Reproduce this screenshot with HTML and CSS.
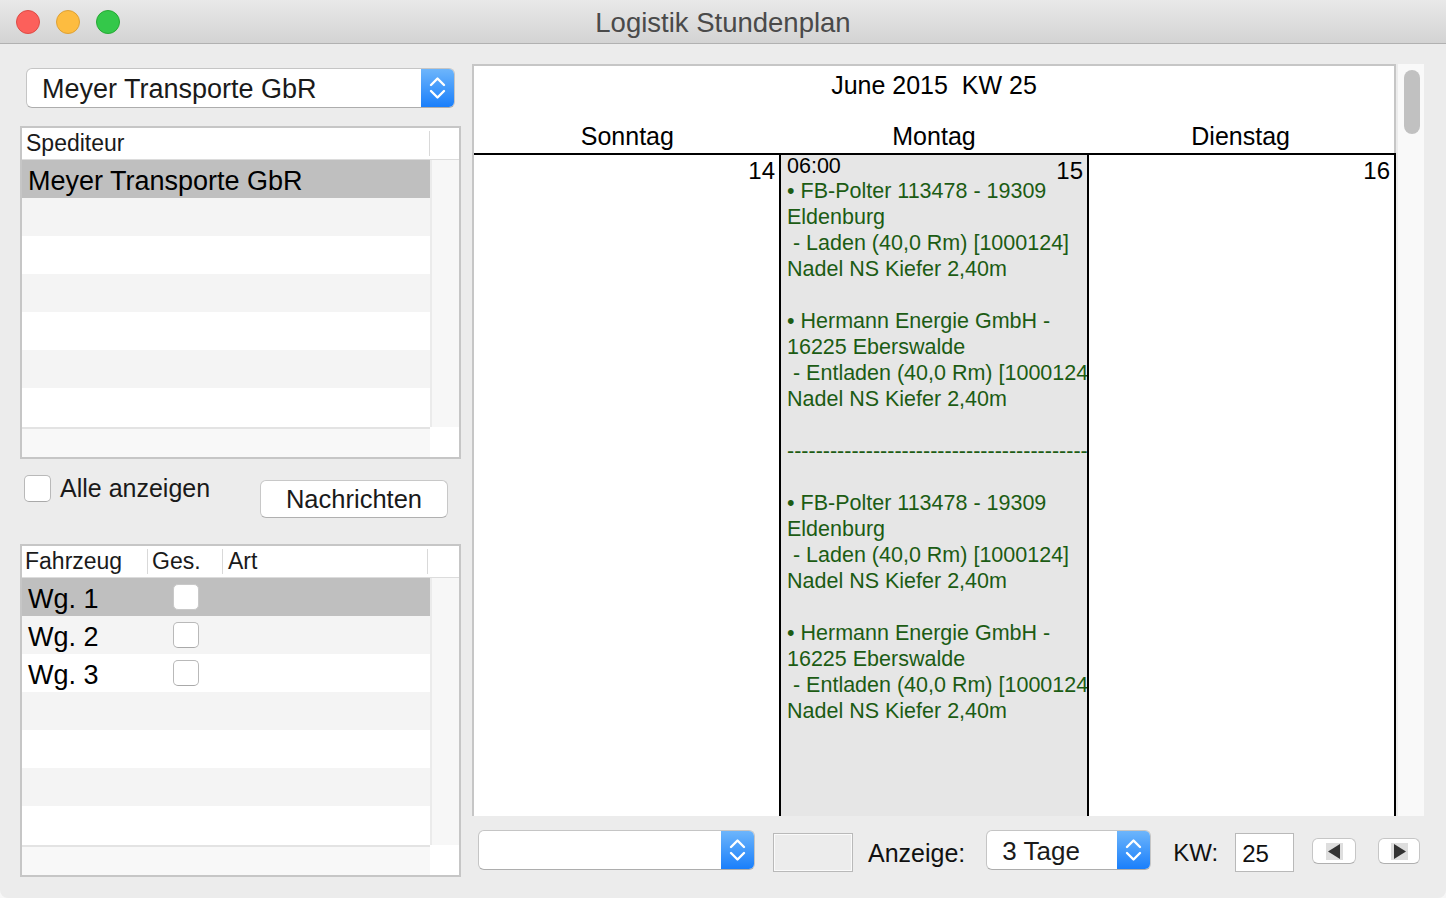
FILE: index.html
```html
<!DOCTYPE html>
<html>
<head>
    <meta charset='utf-8'>
    <title>Logistik Stundenplan</title>
    <meta name='viewport' content='width=device-width, initial-scale=1'>
    <link rel="stylesheet" href="styles.css">
</head>
<body>
<div class="window">
    <header class="titlebar">
        <div class="lights">
            <span class="light red"></span>
            <span class="light yellow"></span>
            <span class="light green"></span>
        </div>
        <div class="title">Logistik Stundenplan</div>
        <div class="lights-spacer"></div>
    </header>

    <div class="content">
        <section class="sidebar">
            <div class="popup popup-spediteur">
                <span class="popup-text">Meyer Transporte GbR</span>
                <span class="popup-arrows">
                    <svg width="33" height="38" viewBox="0 0 33 38"><polyline points="10,16 16.5,9.5 23,16" fill="none" stroke="#fff" stroke-width="2.4" stroke-linecap="round" stroke-linejoin="round"/><polyline points="10,22 16.5,28.5 23,22" fill="none" stroke="#fff" stroke-width="2.4" stroke-linecap="round" stroke-linejoin="round"/></svg>
                </span>
            </div>

            <div class="table table-spediteur">
                <div class="thead">
                    <div class="th th-spediteur">Spediteur</div>
                </div>
                <div class="tbody">
                    <div class="rows">
                        <div class="row selected"><span class="cell">Meyer Transporte GbR</span></div>
                        <div class="row"></div>
                        <div class="row"></div>
                        <div class="row"></div>
                        <div class="row"></div>
                        <div class="row"></div>
                        <div class="row"></div>
                    </div>
                    <div class="vscroll"></div>
                </div>
                <div class="tfoot"><div class="hscroll"></div><div class="corner"></div></div>
            </div>

            <div class="options">
                <label class="check-label"><span class="checkbox"></span>Alle anzeigen</label>
                <button class="button">Nachrichten</button>
            </div>

            <div class="table table-fahrzeug">
                <div class="thead">
                    <div class="th col-fahrzeug">Fahrzeug</div>
                    <div class="th col-ges">Ges.</div>
                    <div class="th col-art">Art</div>
                </div>
                <div class="tbody">
                    <div class="rows">
                        <div class="row selected"><span class="cell col-fahrzeug">Wg. 1</span><span class="cell col-ges"><span class="checkbox small"></span></span></div>
                        <div class="row"><span class="cell col-fahrzeug">Wg. 2</span><span class="cell col-ges"><span class="checkbox small"></span></span></div>
                        <div class="row"><span class="cell col-fahrzeug">Wg. 3</span><span class="cell col-ges"><span class="checkbox small"></span></span></div>
                        <div class="row"></div>
                        <div class="row"></div>
                        <div class="row"></div>
                        <div class="row"></div>
                    </div>
                    <div class="vscroll"></div>
                </div>
                <div class="tfoot"><div class="hscroll"></div><div class="corner"></div></div>
            </div>
        </section>

        <section class="main">
            <div class="calendar">
                <div class="calendar-doc">
                    <div class="cal-head">
                        <div class="cal-title">June 2015  KW 25</div>
                        <div class="cal-days">
                            <div>Sonntag</div>
                            <div>Montag</div>
                            <div>Dienstag</div>
                        </div>
                    </div>
                    <div class="cal-grid">
                        <div class="day">
                            <div class="day-num">14</div>
                        </div>
                        <div class="day today">
                            <div class="day-num">15</div>
                            <div class="time">06:00</div>
                            <div class="entries">
                                <div class="line">• FB-Polter 113478 - 19309</div>
                                <div class="line">Eldenburg</div>
                                <div class="line"> - Laden (40,0 Rm) [1000124]</div>
                                <div class="line">Nadel NS Kiefer 2,40m</div>
                                <div class="line"></div>
                                <div class="line">• Hermann Energie GmbH -</div>
                                <div class="line">16225 Eberswalde</div>
                                <div class="line"> - Entladen (40,0 Rm) [1000124]</div>
                                <div class="line">Nadel NS Kiefer 2,40m</div>
                                <div class="line"></div>
                                <div class="line">--------------------------------------------------------</div>
                                <div class="line"></div>
                                <div class="line">• FB-Polter 113478 - 19309</div>
                                <div class="line">Eldenburg</div>
                                <div class="line"> - Laden (40,0 Rm) [1000124]</div>
                                <div class="line">Nadel NS Kiefer 2,40m</div>
                                <div class="line"></div>
                                <div class="line">• Hermann Energie GmbH -</div>
                                <div class="line">16225 Eberswalde</div>
                                <div class="line"> - Entladen (40,0 Rm) [1000124]</div>
                                <div class="line">Nadel NS Kiefer 2,40m</div>
                            </div>
                        </div>
                        <div class="day">
                            <div class="day-num">16</div>
                        </div>
                    </div>
                </div>
                <div class="cal-scroll"><div class="thumb"></div></div>
            </div>

            <div class="toolbar">
                <div class="popup popup-empty">
                    <span class="popup-text"></span>
                    <span class="popup-arrows">
                        <svg width="33" height="38" viewBox="0 0 33 38"><polyline points="10,16 16.5,9.5 23,16" fill="none" stroke="#fff" stroke-width="2.4" stroke-linecap="round" stroke-linejoin="round"/><polyline points="10,22 16.5,28.5 23,22" fill="none" stroke="#fff" stroke-width="2.4" stroke-linecap="round" stroke-linejoin="round"/></svg>
                    </span>
                </div>
                <div class="swatch"></div>
                <span class="tb-label label-anzeige">Anzeige:</span>
                <div class="popup popup-tage">
                    <span class="popup-text">3 Tage</span>
                    <span class="popup-arrows">
                        <svg width="33" height="38" viewBox="0 0 33 38"><polyline points="10,16 16.5,9.5 23,16" fill="none" stroke="#fff" stroke-width="2.4" stroke-linecap="round" stroke-linejoin="round"/><polyline points="10,22 16.5,28.5 23,22" fill="none" stroke="#fff" stroke-width="2.4" stroke-linecap="round" stroke-linejoin="round"/></svg>
                    </span>
                </div>
                <span class="tb-label label-kw">KW:</span>
                <div class="field">25</div>
                <button class="nav nav-prev">
                    <svg width="17" height="17" viewBox="0 0 17 17"><rect width="17" height="17" fill="#dedede"/><polygon points="2,8.5 14,1 14,16" fill="#333"/></svg>
                </button>
                <button class="nav nav-next">
                    <svg width="17" height="17" viewBox="0 0 17 17"><rect width="17" height="17" fill="#dedede"/><polygon points="3,1 3,16 15,8.5" fill="#333"/></svg>
                </button>
            </div>
        </section>
    </div>
</div>
</body>
</html>
```

FILE: styles.css
```css
* {
    font-family: "Liberation Sans", Arial, Helvetica, sans-serif;
    box-sizing: border-box;
}

html, body {
    margin: 0;
    padding: 0;
    background: #f7f7f7;
}

.window {
    width: 1446px;
    height: 898px;
    background: #ececec;
    border-radius: 0 0 8px 8px;
    overflow: hidden;
    display: flex;
    flex-direction: column;
    color: #111;
}

/* title bar */

.titlebar {
    height: 44px;
    flex: none;
    display: flex;
    align-items: center;
    background: linear-gradient(#e9e9e9, #d3d3d3);
    border-bottom: 1px solid #b1b1b1;
}

.lights {
    width: 140px;
    display: flex;
    gap: 16px;
    padding-left: 16px;
}

.light {
    width: 24px;
    height: 24px;
    border-radius: 50%;
    border: 1px solid;
}

.red { background: #fc605b; border-color: #de4b45; }
.yellow { background: #fdbc40; border-color: #dea135; }
.green { background: #34c84a; border-color: #26a934; }

.title {
    flex: 1;
    padding-top: 3px;
    text-align: center;
    font-size: 27.5px;
    color: #4a4a4a;
}

.lights-spacer {
    width: 140px;
}

/* layout */

.content {
    flex: 1;
    display: flex;
    gap: 11px;
    padding: 20px 22px 0 20px;
}

.sidebar {
    width: 441px;
    flex: none;
    display: flex;
    flex-direction: column;
}

.main {
    width: 952px;
    flex: none;
    display: flex;
    flex-direction: column;
}

/* popup buttons */

.popup {
    display: flex;
    align-items: center;
    height: 40px;
    flex: none;
    background: #fff;
    border: 1px solid #c5c5c5;
    border-bottom-color: #adadad;
    border-radius: 6px;
    overflow: hidden;
}

.popup-text {
    flex: 1;
    padding-left: 15px;
    padding-top: 2px;
    white-space: nowrap;
    color: #1a1a1a;
}

.popup-arrows {
    width: 33px;
    height: 100%;
    display: flex;
    align-items: center;
    justify-content: center;
    background: linear-gradient(#6db5fb, #1a7ffb);
}

.popup-spediteur {
    margin: 4px 6px 0;
}

.popup-spediteur .popup-text {
    font-size: 27px;
}

/* tables */

.table {
    height: 333px;
    flex: none;
    border: 2px solid #c6c6c6;
    background: #fff;
    display: flex;
    flex-direction: column;
}

.table-spediteur {
    margin-top: 18px;
}

.table-fahrzeug {
    margin-top: 26px;
}

.thead {
    height: 32px;
    flex: none;
    display: flex;
    align-items: center;
    border-bottom: 1px solid #dcdcdc;
}

.th {
    height: 25px;
    line-height: 25px;
    font-size: 23px;
    padding-left: 3px;
    border-right: 1px solid #d9d9d9;
    color: #1a1a1a;
    white-space: nowrap;
}

.th-spediteur {
    width: 408px;
    padding-left: 4px;
}

.col-fahrzeug {
    width: 126px;
    flex: none;
}

.col-ges {
    width: 75px;
    flex: none;
}

.th.col-ges {
    padding-left: 4px;
}

.col-art {
    width: 205px;
    flex: none;
}

.th.col-art {
    padding-left: 5px;
}

.tbody {
    flex: 1;
    display: flex;
}

.rows {
    flex: 1;
}

.vscroll {
    width: 29px;
    background: #f7f7f7;
    border-left: 2px solid #ebebeb;
}

.row {
    height: 38px;
    display: flex;
    align-items: center;
    font-size: 27px;
    color: #000;
}

.row:nth-child(even) {
    background: #f4f4f4;
}

.row.selected {
    background: #bfbfbf;
}

.cell {
    padding-left: 6px;
    padding-top: 4px;
    white-space: nowrap;
}

.cell.col-ges {
    display: flex;
    justify-content: center;
    padding: 0 0 0 1px;
}

.tfoot {
    height: 30px;
    flex: none;
    display: flex;
}

.hscroll {
    flex: 1;
    background: #f8f8f8;
    border-top: 2px solid #e3e3e3;
}

.corner {
    width: 29px;
    background: #fff;
}

/* checkbox + button row */

.options {
    display: flex;
    align-items: flex-start;
    margin-top: 16px;
    height: 43px;
    flex: none;
}

.check-label {
    display: flex;
    align-items: center;
    gap: 9px;
    height: 27px;
    margin-left: 4px;
    font-size: 25px;
    color: #1a1a1a;
}

.checkbox {
    display: block;
    width: 27px;
    height: 27px;
    background: #fff;
    border: 1px solid #b9b9b9;
    border-bottom-color: #a9a9a9;
    border-radius: 5px;
}

.checkbox.small {
    width: 26px;
    height: 26px;
}

.row.selected .checkbox {
    border-color: #c9c9c9;
}

.button {
    width: 188px;
    height: 38px;
    margin: 5px 13px 0 auto;
    padding: 0;
    background: #fff;
    border: 1px solid #c8c8c8;
    border-bottom-color: #b0b0b0;
    border-radius: 6px;
    font-size: 25.5px;
    color: #1a1a1a;
}

/* calendar */

.calendar {
    height: 752px;
    flex: none;
    display: flex;
}

.calendar-doc {
    width: 924px;
    background: #fff;
    border-left: 2px solid #c6c6c6;
    border-top: 2px solid #c6c6c6;
    display: flex;
    flex-direction: column;
    overflow: hidden;
}

.cal-head {
    height: 87px;
    flex: none;
    padding-top: 4px;
    border-right: 2px solid #c6c6c6;
}

.cal-title {
    text-align: center;
    font-size: 25px;
    line-height: 30px;
    white-space: pre;
    color: #000;
}

.cal-days {
    display: grid;
    grid-template-columns: repeat(3, 1fr);
    margin-top: 21px;
    font-size: 25px;
    line-height: 30px;
    text-align: center;
    color: #000;
}

.cal-grid {
    flex: 1;
    display: grid;
    grid-template-columns: 307px 308px 307px;
    border-top: 2px solid #000;
}

.day {
    border-right: 2px solid #000;
    overflow: hidden;
    padding: 0 4px 0 6px;
}

.day.today {
    background: #e6e6e6;
}

.day-num {
    float: right;
    margin-top: 3px;
    font-size: 24px;
    line-height: 26px;
    color: #000;
}

.time {
    font-size: 21.5px;
    line-height: 22px;
    color: #000;
}

.entries {
    font-size: 21.5px;
    line-height: 26px;
    color: #1c5c14;
}

.line {
    height: 26px;
    padding-top: 1px;
    white-space: pre;
}

.cal-scroll {
    width: 26px;
    margin-left: 2px;
    padding: 6px 0 0 6px;
    background: #f9f9f9;
}

.thumb {
    width: 16px;
    height: 64px;
    border-radius: 8px;
    background: #c1c1c1;
}

/* bottom toolbar */

.toolbar {
    display: flex;
    align-items: flex-start;
    height: 42px;
    margin-top: 14px;
}

.popup-empty {
    width: 277px;
    margin-left: 6px;
}

.swatch {
    width: 80px;
    height: 39px;
    margin: 3px 0 0 18px;
    border: 1px solid #b9b9b9;
    box-shadow: inset 0 0 0 1px #fafafa;
    background: #ececec;
}

.tb-label {
    line-height: 40px;
    margin-top: 3px;
    color: #111;
    white-space: nowrap;
}

.label-anzeige {
    font-size: 25px;
    margin: 3px 21px 0 15px;
}

.popup-tage {
    width: 165px;
}

.popup-tage .popup-text {
    font-size: 26px;
}

.label-kw {
    font-size: 24px;
    margin: 3px 17px 0 22px;
}

.field {
    width: 59px;
    height: 39px;
    margin-top: 3px;
    padding: 5px 0 0 6px;
    background: #fff;
    border: 1px solid #b9b9b9;
    font-size: 24px;
    line-height: 30px;
    color: #111;
}

.nav {
    width: 44px;
    height: 26px;
    margin: 8px 0 0 18px;
    padding: 0;
    display: flex;
    align-items: center;
    justify-content: center;
    background: #fff;
    border: 1px solid #c6c6c6;
    border-bottom-color: #b0b0b0;
    border-radius: 6px;
}

.nav-next {
    width: 42px;
    margin-left: 22px;
}
```
